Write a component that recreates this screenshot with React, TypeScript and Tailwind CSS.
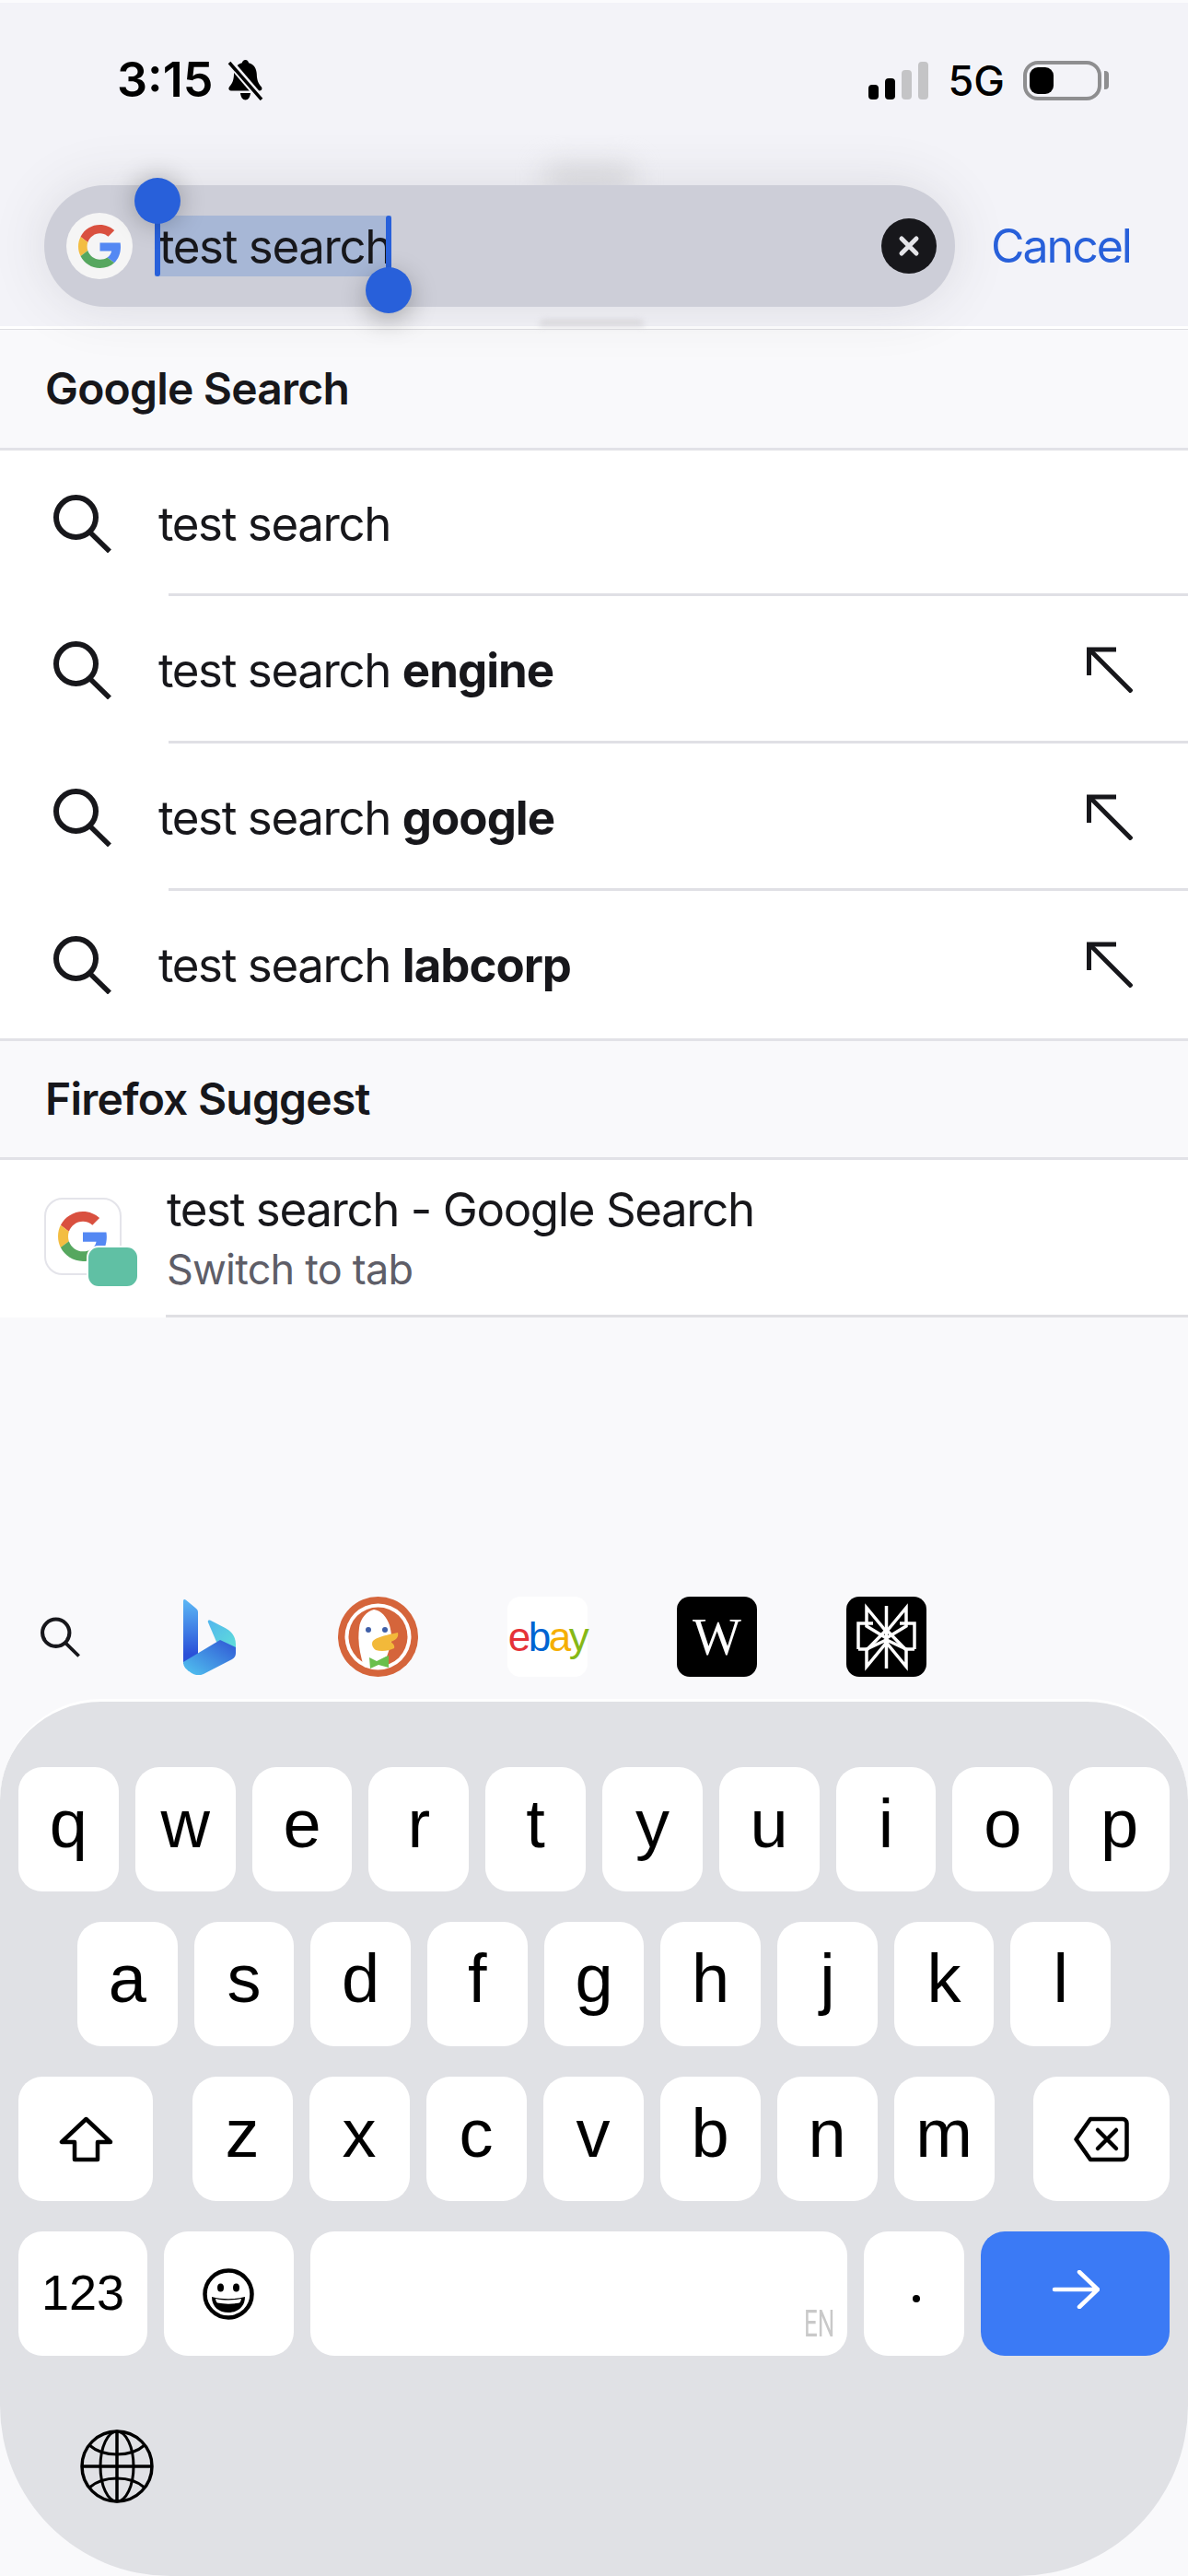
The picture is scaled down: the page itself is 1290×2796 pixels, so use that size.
const FONT = "font-['Inter','Noto_Sans',sans-serif]";

function GoogleG({ className }: { className?: string }) {
  return (
    <svg viewBox="0 0 48 48" className={className}>
      <path fill="#d9503f" d="M24 9.5c3.54 0 6.71 1.22 9.21 3.6l6.85-6.85C35.9 2.38 30.47 0 24 0 14.62 0 6.51 5.38 2.56 13.22l7.98 6.19C12.43 13.72 17.74 9.5 24 9.5z" />
      <path fill="#5488f3" d="M46.98 24.55c0-1.57-.15-3.09-.38-4.55H24v9.02h12.94c-.58 2.96-2.26 5.48-4.78 7.18l7.73 6c4.51-4.18 7.09-10.36 7.09-17.65z" />
      <path fill="#f3bd42" d="M10.53 28.59c-.48-1.45-.76-2.99-.76-4.59s.27-3.14.76-4.59l-7.98-6.19C.92 16.46 0 20.12 0 24c0 3.88.92 7.54 2.56 10.78l7.97-6.19z" />
      <path fill="#56a75f" d="M24 48c6.48 0 11.93-2.13 15.89-5.81l-7.73-6c-2.15 1.45-4.92 2.3-8.16 2.3-6.26 0-11.57-4.22-13.47-9.91l-7.98 6.19C6.51 42.62 14.62 48 24 48z" />
    </svg>
  );
}

function SearchIcon({ className }: { className?: string }) {
  return (
    <svg viewBox="0 0 63 63" fill="none" stroke="#17171b" className={className}>
      <circle cx="24.5" cy="24.5" r="21.5" strokeWidth="6" />
      <path d="M39.5 40.5 61 61.5" strokeWidth="5.5" />
    </svg>
  );
}

function FillArrow() {
  return (
    <svg viewBox="0 0 50 50" fill="none" stroke="#17171b" strokeWidth="5" className="h-[50px] w-[50px]">
      <path d="M2.5 31V3H32" />
      <path d="M3 3l46 46" />
    </svg>
  );
}

function BellOff() {
  return (
    <svg viewBox="0 0 41 44" className="h-[44px] w-[41px]">
      <path fill="#000" d="M20.5 0c2 0 3.3 1.3 3.5 3.2 6 1.5 8.6 6.6 8.8 12.4.2 6 1.2 9.3 4.8 13.4 1.6 1.8.8 4.4-1.7 4.4H4.9c-2.5 0-3.3-2.6-1.7-4.4 3.6-4.1 4.6-7.4 4.8-13.4.2-5.8 2.8-10.9 8.8-12.4C17.2 1.3 18.5 0 20.5 0z" />
      <path fill="#000" d="M15 36h11c-.4 4.5-2.5 7.5-5.5 7.5S15.4 40.5 15 36z" />
      <path stroke="#f3f3f8" strokeWidth="8" d="M3 2 38 43" />
      <path stroke="#000" strokeWidth="3.5" d="M3 3 38 43" />
    </svg>
  );
}

function SignalBars() {
  return (
    <div className="flex items-end gap-[7px]">
      <div className="h-[16px] w-[11px] rounded-[4px] bg-black" />
      <div className="h-[23px] w-[11px] rounded-[4px] bg-black" />
      <div className="h-[32px] w-[11px] rounded-[4px] bg-[#c4c4c6]" />
      <div className="h-[41px] w-[11px] rounded-[4px] bg-[#c4c4c6]" />
    </div>
  );
}

function Battery() {
  return (
    <div className="flex items-center gap-[3px]">
      <div className="flex h-[43px] w-[85px] items-center rounded-[16px] border-[4px] border-[#8e8e90] pl-[3px]">
        <div className="h-[29px] w-[26px] rounded-[9px] bg-black" />
      </div>
      <div className="h-[20px] w-[5px] rounded-r-[4px] bg-[#8e8e90]" />
    </div>
  );
}

function SearchPill() {
  return (
    <div className="flex h-[132px] w-[989px] items-center rounded-[66px] bg-[#cdced8] pl-[24px] pr-[20px] shadow-[0_0_60px_rgba(60,60,70,0.13)]">
      <div className="flex h-[72px] w-[72px] shrink-0 items-center justify-center rounded-full bg-[#f5f5f5]">
        <GoogleG className="h-[47px] w-[47px]" />
      </div>
      <div className="relative ml-[24px] flex h-[66px] w-[257px] items-center whitespace-nowrap bg-[#a7b7d6] pl-[5px] text-[51px] leading-none tracking-[-1.4px] text-[#17171b]">
        test search
        <div className="absolute bottom-0 left-0 top-0 w-[6px] rounded-full bg-[#2860da]" />
        <div className="absolute left-[-22px] top-[-41px] h-[50px] w-[50px] rounded-full bg-[#2860da] shadow-[0_0_28px_rgba(0,0,0,0.28)]" />
        <div className="absolute bottom-0 right-0 top-0 w-[6px] rounded-full bg-[#2860da]" />
        <div className="absolute bottom-[-40px] right-[-22px] h-[50px] w-[50px] rounded-full bg-[#2860da] shadow-[0_8px_28px_rgba(0,0,0,0.28)]" />
      </div>
      <div className="ml-auto flex h-[60px] w-[60px] items-center justify-center rounded-full bg-[#17171b]">
        <svg viewBox="0 0 24 24" fill="none" stroke="#e4e4e8" strokeWidth="5" strokeLinecap="round" className="h-[24px] w-[24px]">
          <path d="M4 4l16 16M20 4 4 20" />
        </svg>
      </div>
    </div>
  );
}

function SectionHeader({ title, height }: { title: string; height: string }) {
  return (
    <div className={`flex items-center border-b-[3px] border-[#e2e2e7] pl-[49px] text-[48px] font-semibold leading-none tracking-[-0.8px] text-[#17171b] ${height}`}>
      {title}
    </div>
  );
}

function SuggestRow({ bold, last, height }: { bold?: string; last?: boolean; height: string }) {
  return (
    <div className={`relative flex items-center bg-white pl-[58px] pr-[60px] ${height}`}>
      <SearchIcon className="h-[63px] w-[63px] shrink-0" />
      <div className="ml-[51px] text-[51px] leading-none tracking-[-1.4px] text-[#17171b]">
        test search {bold && <span className="font-bold tracking-[-1px]">{bold}</span>}
      </div>
      {bold && (
        <div className="ml-auto">
          <FillArrow />
        </div>
      )}
      {!last && <div className="absolute bottom-0 left-[183px] right-0 h-[3px] bg-[#e0e0e5]" />}
    </div>
  );
}

function TabRow() {
  return (
    <div className="relative flex h-[171px] items-center bg-white pt-[1px] pl-[48px]">
      <div className="relative mb-[6px] flex h-[84px] w-[84px] shrink-0 items-center justify-start rounded-[20px] border-[2px] border-[#e4e4ea] bg-white pl-[13px]">
        <GoogleG className="h-[54px] w-[54px]" />
        <div className="absolute left-[44px] top-[50px] h-[46px] w-[57px] rounded-[13px] border-[2px] border-white bg-[#60c0a4]" />
      </div>
      <div className="ml-[49px] flex flex-col">
        <div className="text-[51px] leading-[60px] tracking-[-1.4px] text-[#17171b]">test search - Google Search</div>
        <div className="mt-[5px] text-[45px] leading-[60px] tracking-[-0.8px] text-[#5e5e68]">Switch to tab</div>
      </div>
      <div className="absolute bottom-0 left-[180px] right-0 h-[3px] bg-[#dfdfe3]" />
    </div>
  );
}

function BingLogo() {
  return (
    <svg viewBox="0 0 57 82" className="h-[82px] w-[57px]">
      <defs>
        <linearGradient id="bing-a" x1="0" y1="0" x2="0" y2="1">
          <stop offset="0" stopColor="#5cb8f5" />
          <stop offset="0.85" stopColor="#2a50d8" />
        </linearGradient>
        <linearGradient id="bing-b" x1="0" y1="1" x2="1" y2="0">
          <stop offset="0" stopColor="#52c5f0" />
          <stop offset="1" stopColor="#2f55d4" />
        </linearGradient>
        <linearGradient id="bing-c" x1="0" y1="0" x2="1" y2="1">
          <stop offset="0" stopColor="#52b6ee" />
          <stop offset="1" stopColor="#5fdfd8" />
        </linearGradient>
      </defs>
      <path fill="url(#bing-a)" d="M0 2c0-2 1.5-2.5 3-1.3L13 9c2 1.5 3 3 3 5v46L0 70z" />
      <path fill="url(#bing-c)" d="M27 25c-.8-2 .5-3.2 2.5-2.2l16 8.2c7.500 4 11.500 10 11.500 18v6L36 46z" />
      <path fill="url(#bing-b)" d="M0 68 40 44l17 8v6c0 3-1 5-4 7L22 81c-4 2-9 1.500-13-1C3 76 0 73 0 68z" />
    </svg>
  );
}

function DuckLogo() {
  return (
    <svg viewBox="0 0 87 87" className="h-[87px] w-[87px]">
      <circle cx="43.5" cy="43.5" r="43.5" fill="#d5653b" />
      <circle cx="43.5" cy="43.5" r="36" fill="#fff" />
      <circle cx="43.5" cy="43.5" r="32" fill="#d5653b" />
      <path fill="#fff" d="M28 76c-4-14-7-26-5-42 1-10 8-18 16-20 8 1 14 8 17 17 2 8 3 14 1 21-2 9-6 18-8 24-7 2-14 2-21 0z" />
      <circle cx="33" cy="36" r="3" fill="#3f5fa8" />
      <circle cx="51" cy="36" r="3" fill="#3f5fa8" />
      <path fill="#f2b93a" d="M38 48c6-5 14-6 27-9 1 4-1 8-8 10 3 2 5 4 4 7-6 3-14 4-20 2-4-3-5-7-3-10z" />
      <path fill="#6abf4b" d="M34 66l8 4 10-5 3-1v13l-11-3-9 4z" />
    </svg>
  );
}

function PerplexityLogo() {
  return (
    <div className="flex h-[87px] w-[87px] items-center justify-center rounded-[14px] bg-black">
      <svg viewBox="0 0 87 87" fill="none" stroke="#fff" strokeWidth="3.5" className="h-[87px] w-[87px]">
        <path d="M43.5 10v68" />
        <path d="M22 12v20l21.5 13L65 32V12L43.5 38 22 12z" />
        <path d="M13 57V29h16M74 57V29H58" />
        <path d="M13 57h10l20.5-21M74 57H64L43.5 36" />
        <path d="M22 76V57l21.5-10L65 57v19L43.5 50 22 76z" />
      </svg>
    </div>
  );
}

function EngineRow() {
  return (
    <div className="mt-[303px] flex h-[87px] items-center gap-[97px] pl-[44px]">
      <SearchIcon className="h-[44px] w-[43px] shrink-0" />
      <div className="flex h-[87px] w-[87px] shrink-0 items-center justify-center">
        <BingLogo />
      </div>
      <div className="-ml-[1px]">
        <DuckLogo />
      </div>
      <div className="flex h-[87px] w-[87px] shrink-0 items-center justify-center rounded-[14px] bg-white font-['Liberation_Sans',sans-serif] text-[44px] leading-none tracking-[-2.5px]">
        <span className="text-[#e53238]">e</span>
        <span className="text-[#0064d2]">b</span>
        <span className="text-[#f5af02]">a</span>
        <span className="text-[#86b817]">y</span>
      </div>
      <div className="flex h-[87px] w-[87px] shrink-0 items-center justify-center rounded-[14px] bg-black font-['Liberation_Serif',serif] text-[56px] leading-none text-white">
        W
      </div>
      <PerplexityLogo />
    </div>
  );
}

function Key({ label }: { label: string }) {
  return (
    <div className="flex h-[135px] flex-1 items-center justify-center rounded-[26px] bg-white pb-[12px] font-['Liberation_Sans',sans-serif] text-[74px] leading-none text-black">
      {label}
    </div>
  );
}

function ShiftIcon() {
  return (
    <svg viewBox="0 0 59 50" fill="none" stroke="#000" strokeWidth="4.5" strokeLinejoin="round" className="h-[50px] w-[59px]">
      <path d="M29.5 3 3 28h14v19h25V28h14L29.5 3z" />
    </svg>
  );
}

function BackspaceIcon() {
  return (
    <svg viewBox="0 0 60 50" fill="none" stroke="#000" strokeWidth="4.5" strokeLinejoin="round" className="h-[50px] w-[60px]">
      <path d="M18 3h35c2.5 0 4.5 2 4.5 4.5v35c0 2.5-2 4.5-4.5 4.5H18L2.500 25 18 3z" />
      <path strokeLinecap="round" d="M26 15l20 20M46 15 26 35" />
    </svg>
  );
}

function EmojiIcon() {
  return (
    <svg viewBox="0 0 56 56" className="h-[56px] w-[56px]">
      <circle cx="28" cy="28" r="25.5" fill="none" stroke="#000" strokeWidth="4.5" />
      <ellipse cx="19.5" cy="21" rx="3.5" ry="4.5" />
      <ellipse cx="36.5" cy="21" rx="3.5" ry="4.5" />
      <path d="M10 31c11 3 25 3 36 0 0 11-8 17-18 17S10 42 10 31z" />
      <path fill="#fff" d="M14 33c9 2 19 2 28 0-.3 2-1 3.5-2 4.5-8 1.5-16 1.5-24 0-1-1-1.7-2.5-2-4.5z" />
    </svg>
  );
}

function GlobeIcon() {
  return (
    <svg viewBox="0 0 80 80" fill="none" stroke="#000" strokeWidth="3" className="h-[80px] w-[80px]">
      <circle cx="40" cy="40" r="38" strokeWidth="3.5" />
      <ellipse cx="40" cy="40" rx="18" ry="38" />
      <path d="M40 2v76M2 40h76" strokeWidth="3.5" />
      <path d="M10 17c8 7 18 10 30 10s22-3 30-10M10 63c8-7 18-10 30-10s22 3 30 10" />
    </svg>
  );
}

function Keyboard() {
  const row1 = ['q', 'w', 'e', 'r', 't', 'y', 'u', 'i', 'o', 'p'];
  const row2 = ['a', 's', 'd', 'f', 'g', 'h', 'j', 'k', 'l'];
  const row3 = ['z', 'x', 'c', 'v', 'b', 'n', 'm'];
  return (
    <div className="mt-[24px] flex h-[952px] flex-col gap-[33px] rounded-b-[185px] rounded-t-[110px] border-t-[3px] border-white bg-[#e0e1e5] pt-[71px]">
      <div className="flex gap-[18px] px-[20px]">
        {row1.map((k) => (
          <Key key={k} label={k} />
        ))}
      </div>
      <div className="flex gap-[18px] px-[84px]">
        {row2.map((k) => (
          <Key key={k} label={k} />
        ))}
      </div>
      <div className="flex justify-between px-[20px]">
        <div className="flex h-[135px] w-[146px] items-center justify-center rounded-[26px] bg-white">
          <ShiftIcon />
        </div>
        <div className="flex w-[871px] gap-[18px]">
          {row3.map((k) => (
            <Key key={k} label={k} />
          ))}
        </div>
        <div className="flex h-[135px] w-[148px] items-center justify-center rounded-[26px] bg-white">
          <BackspaceIcon />
        </div>
      </div>
      <div className="flex gap-[18px] px-[20px]">
        <div className="flex h-[135px] w-[140px] items-center justify-center rounded-[26px] bg-white pb-[4px] font-['Liberation_Sans',sans-serif] text-[54px] leading-none text-black">
          123
        </div>
        <div className="flex h-[135px] w-[141px] items-center justify-center rounded-[26px] bg-white">
          <EmojiIcon />
        </div>
        <div className="relative h-[135px] w-[584px] rounded-[26px] bg-white">
          <span className="absolute bottom-[14px] right-[14px] origin-right scale-x-[0.65] font-['Roboto',sans-serif] text-[40px] leading-none text-[#c9c9c9]">
            EN
          </span>
        </div>
        <div className="flex h-[135px] w-[109px] items-center justify-center rounded-[26px] bg-white pl-[4px] pt-[10px]">
          <div className="h-[8px] w-[8px] rounded-full bg-black" />
        </div>
        <div className="flex h-[135px] w-[205px] items-center justify-center rounded-[26px] bg-[#3b7af5] pb-[10px]">
          <svg viewBox="0 0 52 42" fill="none" stroke="#fff" strokeWidth="4.5" strokeLinecap="round" className="h-[42px] w-[52px]">
            <path d="M3 21h46M30 2l20 19-20 19" />
          </svg>
        </div>
      </div>
      <div className="mt-[47px] pl-[87px]">
        <GlobeIcon />
      </div>
    </div>
  );
}

export default function App() {
  return (
    <div className={`flex h-[2796px] w-[1290px] flex-col overflow-hidden bg-[#f9f9fb] ${FONT}`}>
      <div className="relative z-10 isolate h-[354px] border-t-[3px] border-[#fbfbfd] bg-[#f3f3f8] pt-[61px]">
        <div className="absolute left-[590px] top-[175px] -z-10 h-[30px] w-[100px] rounded-full bg-[#dcdce0] blur-[14px]" />
        <div className="absolute bottom-0 left-[585px] -z-10 h-[7px] w-[115px] rounded-t-full bg-[#dedde1] blur-[3px]" />
        <div className="flex h-[46px] items-center pl-[127px] pr-[86px]">
          <span className="text-[52px] font-semibold leading-none text-black">3:15</span>
          <div className="ml-[15px]">
            <BellOff />
          </div>
          <div className="ml-auto">
            <SignalBars />
          </div>
          <span className="ml-[22px] text-[45px] font-medium leading-none text-black">5G</span>
          <div className="ml-[20px]">
            <Battery />
          </div>
        </div>
        <div className="mt-[91px] flex items-center pl-[48px]">
          <SearchPill />
          <span className="ml-[39px] text-[50px] leading-none tracking-[-2px] text-[#2860da]">Cancel</span>
        </div>
      </div>
      <div className="h-[4px] border-b-[1px] border-[#dedee2] bg-white" />
      <SectionHeader title="Google Search" height="h-[131px]" />
      <SuggestRow height="h-[158px]" />
      <SuggestRow bold="engine" height="h-[160px]" />
      <SuggestRow bold="google" height="h-[160px]" />
      <SuggestRow bold="labcorp" last height="h-[160px]" />
      <div className="h-[3px] bg-[#e2e2e7]" />
      <SectionHeader title="Firefox Suggest" height="h-[129px]" />
      <TabRow />
      <EngineRow />
      <Keyboard />
    </div>
  );
}
